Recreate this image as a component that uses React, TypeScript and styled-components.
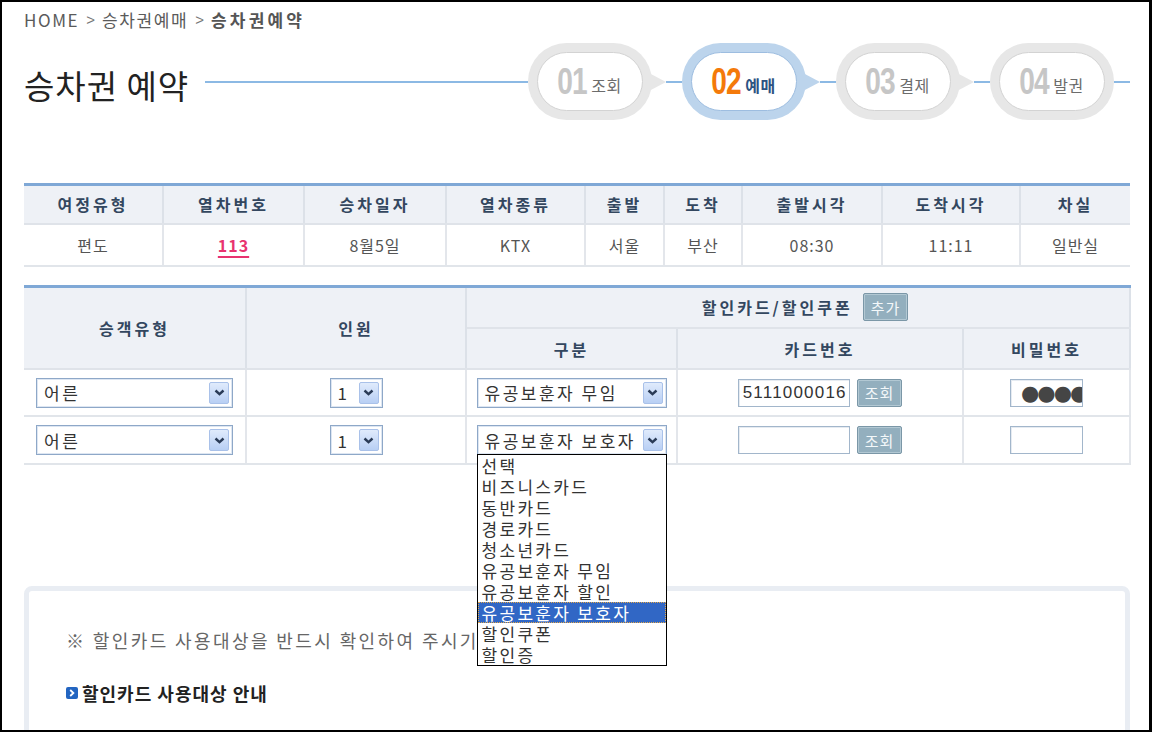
import React from "react";
import styled, { createGlobalStyle } from "styled-components";

const GlobalStyle = createGlobalStyle`
  html, body { margin: 0; padding: 0; background: #fff; }
  body { font-family: "Noto Sans CJK KR", "Noto Sans", "Liberation Sans", sans-serif; }
  * { box-sizing: border-box; }
`;

const Frame = styled.div`
  width: 1152px;
  height: 732px;
  border: 2px solid #000;
  border-right-width: 3px;
  overflow: hidden;
  padding: 0 19px 0 22px;
  background: #fff;
`;

const Breadcrumb = styled.div`
  margin-top: 7px;
  height: 20px;
  display: flex;
  align-items: center;
  gap: 7px;
  font-size: 17px;
  color: #555;
`;

const Crumb = styled.span<{ $current?: boolean }>`
  letter-spacing: ${(p) => (p.$current ? "3.2px" : "1.6px")};
  font-weight: ${(p) => (p.$current ? 700 : 400)};
  color: ${(p) => (p.$current ? "#555" : "#5a5a5a")};
`;

const Sep = styled.span`
  color: #777;
  font-family: "Liberation Sans", sans-serif;
  font-size: 15px;
`;

const TitleRow = styled.div`
  display: flex;
  align-items: center;
  height: 77px;
  margin-top: 14px;
`;

const Title = styled.h1`
  margin: 0;
  padding-top: 6px;
  font-size: 33px;
  font-weight: 400;
  color: #222;
  letter-spacing: 1px;
  flex: none;
`;

const Line = styled.span<{ $w?: number }>`
  display: block;
  height: 2px;
  background: #8cb9e4;
  flex: ${(p) => (p.$w ? "none" : "1")};
  width: ${(p) => (p.$w ? `${p.$w}px` : "auto")};
  margin-left: ${(p) => (p.$w ? "0" : "16px")};
`;

const Step = styled.div<{ $active?: boolean }>`
  width: 124px;
  height: 77px;
  border-radius: 39px;
  padding: 9px;
  flex: none;
  background: ${(p) => (p.$active ? "#bcd4ec" : "#e7e7e7")};
`;

const StepInner = styled.div<{ $active?: boolean }>`
  height: 100%;
  border-radius: 30px;
  background: #fff;
  border: 1px solid ${(p) => (p.$active ? "#9dbde0" : "#d3d3d3")};
  display: flex;
  align-items: center;
  justify-content: center;
  gap: 4px;
`;

const StepNum = styled.span<{ $active?: boolean }>`
  display: inline-block;
  font-family: "Liberation Sans", sans-serif;
  font-weight: 700;
  font-size: 36px;
  line-height: 1;
  letter-spacing: -1px;
  transform: scaleX(0.78);
  margin: 0 -4px 0 -5px;
  color: ${(p) => (p.$active ? "#f47a0a" : "#c6c6c6")};
`;

const StepLabel = styled.span<{ $active?: boolean }>`
  font-size: 16px;
  padding-top: 6px;
  letter-spacing: 0.5px;
  font-weight: ${(p) => (p.$active ? 700 : 400)};
  color: ${(p) => (p.$active ? "#2d5382" : "#6c6c6c")};
`;

const Pointer = styled.span<{ $active?: boolean }>`
  width: 0;
  height: 0;
  flex: none;
  margin-left: -3px;
  border-top: 9px solid transparent;
  border-bottom: 9px solid transparent;
  border-left: 17px solid ${(p) => (p.$active ? "#bcd4ec" : "#e7e7e7")};
`;

const Table = styled.table<{ $mt: number }>`
  width: 100%;
  border-collapse: collapse;
  table-layout: fixed;
  border-top: 3px solid #7fa8d6;
  margin-top: ${(p) => p.$mt}px;
`;

const Th = styled.th<{ $h?: number; $last?: boolean }>`
  background: #eef1f6;
  color: #33475f;
  font-weight: 700;
  font-size: 16px;
  letter-spacing: 3px;
  height: ${(p) => p.$h ?? 39}px;
  padding: 0;
  border-right: ${(p) => (p.$last ? "0" : "2px solid #dce1e8")};
  border-bottom: 2px solid #dfe3e9;
  text-align: center;
  vertical-align: middle;
`;

const Td = styled.td<{ $h?: number; $last?: boolean }>`
  height: ${(p) => p.$h ?? 42}px;
  padding: 0;
  border-right: ${(p) => (p.$last ? "0" : "2px solid #e3e6eb")};
  border-bottom: 2px solid #e1e5ea;
  text-align: center;
  vertical-align: middle;
  font-size: 16px;
  color: #555;
  letter-spacing: 1px;
`;

const TrainNo = styled.a`
  color: #e8336f;
  font-weight: 700;
  text-decoration: underline;
  text-decoration-thickness: 2px;
  text-underline-offset: 4px;
`;

const SelectWrap = styled.div<{ $w: number }>`
  position: relative;
  display: inline-flex;
  align-items: center;
  justify-content: space-between;
  width: ${(p) => p.$w}px;
  height: 30px;
  border: 1px solid #8ea8c8;
  box-shadow: inset 0 0 0 1px #dde6f2;
  background: #fff;
  padding: 0 3px 0 7px;
  font-size: 17px;
  color: #333;
  letter-spacing: 2.5px;
  text-align: left;
  vertical-align: middle;
  white-space: nowrap;
`;

const SelectArrow = styled.span`
  width: 20px;
  height: 22px;
  flex: none;
  border: 1px solid #a9c1e9;
  border-radius: 2px;
  background: linear-gradient(#e0ebfc, #b8cff4);
  display: flex;
  align-items: center;
  justify-content: center;
`;

const ListBox = styled.ul`
  position: absolute;
  top: 100%;
  left: -1px;
  z-index: 10;
  width: calc(100% + 2px);
  margin: 0;
  padding: 0;
  list-style: none;
  background: #fff;
  border: 1px solid #000;
`;

const ListItem = styled.li<{ $selected?: boolean }>`
  height: 21px;
  line-height: 21px;
  padding-left: 4px;
  font-size: 17px;
  letter-spacing: 2.3px;
  color: ${(p) => (p.$selected ? "#fff" : "#333")};
  background: ${(p) => (p.$selected ? "#3167c5" : "transparent")};
  outline: ${(p) => (p.$selected ? "1px dotted #e3a84a" : "none")};
  outline-offset: -1px;
  overflow: hidden;
`;

const CardGroup = styled.div`
  display: inline-flex;
  align-items: center;
  gap: 7px;
  vertical-align: middle;
`;

const TextField = styled.div<{ $w: number }>`
  width: ${(p) => p.$w}px;
  height: 28px;
  border: 1px solid #a2b6cb;
  box-shadow: inset 1px 1px 0 #e6ebf1;
  background: #fff;
  padding: 0 4px;
  display: inline-flex;
  align-items: center;
  font-family: "Liberation Sans", sans-serif;
  font-size: 17px;
  color: #333;
  letter-spacing: 1.2px;
  overflow: hidden;
  white-space: nowrap;
  vertical-align: middle;
`;

const PasswordDots = styled.span`
  font-family: "DejaVu Sans", sans-serif;
  font-size: 21px;
  color: #454545;
  letter-spacing: -2px;
  padding-left: 6px;
`;

const SmallButton = styled.button`
  height: 28px;
  padding: 0 7px;
  background: #93afbe;
  border: 1px solid #7b97a7;
  box-shadow: inset 0 0 0 1px #b2c8d3;
  border-radius: 2px;
  color: #f3f8fa;
  font-family: inherit;
  font-size: 15px;
  letter-spacing: 1px;
  vertical-align: middle;
`;

const DiscountHead = styled.div`
  display: inline-flex;
  align-items: center;
  gap: 10px;
  padding-left: 14px;
`;

const NoticeBox = styled.div`
  margin-top: 121px;
  height: 220px;
  border: 5px solid #e9edf3;
  border-radius: 8px;
  padding: 37px 0 0 37px;
`;

const NoticeText = styled.p`
  margin: 0;
  font-size: 18px;
  line-height: 24px;
  color: #666;
  letter-spacing: 2.4px;
  white-space: nowrap;
`;

const GuideTitle = styled.h3`
  margin: 29px 0 0;
  display: flex;
  align-items: center;
  gap: 4px;
  font-size: 18px;
  line-height: 24px;
  font-weight: 700;
  color: #222;
  letter-spacing: 1px;
`;

const GuideIcon = styled.span`
  width: 12px;
  height: 12px;
  border-radius: 2px;
  background: #2365c1;
  display: inline-flex;
  align-items: center;
  justify-content: center;
  flex: none;
`;

const Chevron = () => (
  <svg width="11" height="7" viewBox="0 0 11 7">
    <path d="M1.5 1.5 L5.5 5.2 L9.5 1.5" fill="none" stroke="#2a3b57" strokeWidth="2.4" />
  </svg>
);

const FakeSelect: React.FC<{ w: number; value: string; options?: string[]; selected?: number }> = ({
  w,
  value,
  options,
  selected,
}) => (
  <SelectWrap $w={w}>
    <span>{value}</span>
    <SelectArrow>
      <Chevron />
    </SelectArrow>
    {options && (
      <ListBox>
        {options.map((o, i) => (
          <ListItem key={o} $selected={i === selected}>
            {o}
          </ListItem>
        ))}
      </ListBox>
    )}
  </SelectWrap>
);

const infoCols = [139, 141, 142, 139, 79, 78, 140, 138, 110];
const infoHead = ["여정유형", "열차번호", "승차일자", "열차종류", "출발", "도착", "출발시각", "도착시각", "차실"];
const infoData = ["편도", "113", "8월5일", "KTX", "서울", "부산", "08:30", "11:11", "일반실"];

const options = [
  "선택",
  "비즈니스카드",
  "동반카드",
  "경로카드",
  "청소년카드",
  "유공보훈자 무임",
  "유공보훈자 할인",
  "유공보훈자 보호자",
  "할인쿠폰",
  "할인증",
];

const steps = [
  { no: "01", label: "조회" },
  { no: "02", label: "예매", active: true },
  { no: "03", label: "결제" },
  { no: "04", label: "발권" },
];

export default function App() {
  return (
    <>
      <GlobalStyle />
      <Frame>
        <Breadcrumb>
          <Crumb>HOME</Crumb>
          <Sep>&gt;</Sep>
          <Crumb>승차권예매</Crumb>
          <Sep>&gt;</Sep>
          <Crumb $current>승차권예약</Crumb>
        </Breadcrumb>

        <TitleRow>
          <Title>승차권 예약</Title>
          <Line />
          {steps.map((s, i) => (
            <React.Fragment key={s.no}>
              <Step $active={s.active}>
                <StepInner $active={s.active}>
                  <StepNum $active={s.active}>{s.no}</StepNum>
                  <StepLabel $active={s.active}>{s.label}</StepLabel>
                </StepInner>
              </Step>
              {i < steps.length - 1 ? (
                <>
                  <Pointer $active={s.active} />
                  <Line $w={16} />
                </>
              ) : (
                <Line $w={16} />
              )}
            </React.Fragment>
          ))}
        </TitleRow>

        <Table $mt={63}>
          <colgroup>
            {infoCols.map((w, i) => (
              <col key={i} style={{ width: w }} />
            ))}
          </colgroup>
          <thead>
            <tr>
              {infoHead.map((h, i) => (
                <Th key={h} $last={i === infoHead.length - 1}>
                  {h}
                </Th>
              ))}
            </tr>
          </thead>
          <tbody>
            <tr>
              {infoData.map((d, i) => (
                <Td key={i} $last={i === infoData.length - 1}>
                  {i === 1 ? <TrainNo>{d}</TrainNo> : d}
                </Td>
              ))}
            </tr>
          </tbody>
        </Table>

        <Table $mt={18}>
          <colgroup>
            <col style={{ width: 222 }} />
            <col style={{ width: 220 }} />
            <col style={{ width: 211 }} />
            <col style={{ width: 286 }} />
            <col style={{ width: 167 }} />
          </colgroup>
          <thead>
            <tr>
              <Th rowSpan={2}>승객유형</Th>
              <Th rowSpan={2}>인원</Th>
              <Th colSpan={3} $h={42}>
                <DiscountHead>
                  할인카드/할인쿠폰
                  <SmallButton>추가</SmallButton>
                </DiscountHead>
              </Th>
            </tr>
            <tr>
              <Th $h={41}>구분</Th>
              <Th $h={41}>카드번호</Th>
              <Th $h={41}>비밀번호</Th>
            </tr>
          </thead>
          <tbody>
            <tr>
              <Td $h={47}>
                <FakeSelect w={197} value="어른" />
              </Td>
              <Td $h={47}>
                <FakeSelect w={53} value="1" />
              </Td>
              <Td $h={47}>
                <FakeSelect w={190} value="유공보훈자 무임" />
              </Td>
              <Td $h={47}>
                <CardGroup>
                  <TextField $w={112}>5111000016</TextField>
                  <SmallButton>조회</SmallButton>
                </CardGroup>
              </Td>
              <Td $h={47}>
                <TextField $w={73}>
                  <PasswordDots>●●●●●</PasswordDots>
                </TextField>
              </Td>
            </tr>
            <tr>
              <Td $h={48}>
                <FakeSelect w={197} value="어른" />
              </Td>
              <Td $h={48}>
                <FakeSelect w={53} value="1" />
              </Td>
              <Td $h={48}>
                <FakeSelect w={190} value="유공보훈자 보호자" options={options} selected={7} />
              </Td>
              <Td $h={48}>
                <CardGroup>
                  <TextField $w={112} />
                  <SmallButton>조회</SmallButton>
                </CardGroup>
              </Td>
              <Td $h={48}>
                <TextField $w={73} />
              </Td>
            </tr>
          </tbody>
        </Table>

        <NoticeBox>
          <NoticeText>※ 할인카드 사용대상을 반드시 확인하여 주시기 바랍니다.</NoticeText>
          <GuideTitle>
            <GuideIcon>
              <svg width="6" height="8" viewBox="0 0 6 8">
                <path d="M1.2 1 L4.4 4 L1.2 7" fill="none" stroke="#fff" strokeWidth="1.8" />
              </svg>
            </GuideIcon>
            할인카드 사용대상 안내
          </GuideTitle>
        </NoticeBox>
      </Frame>
    </>
  );
}
